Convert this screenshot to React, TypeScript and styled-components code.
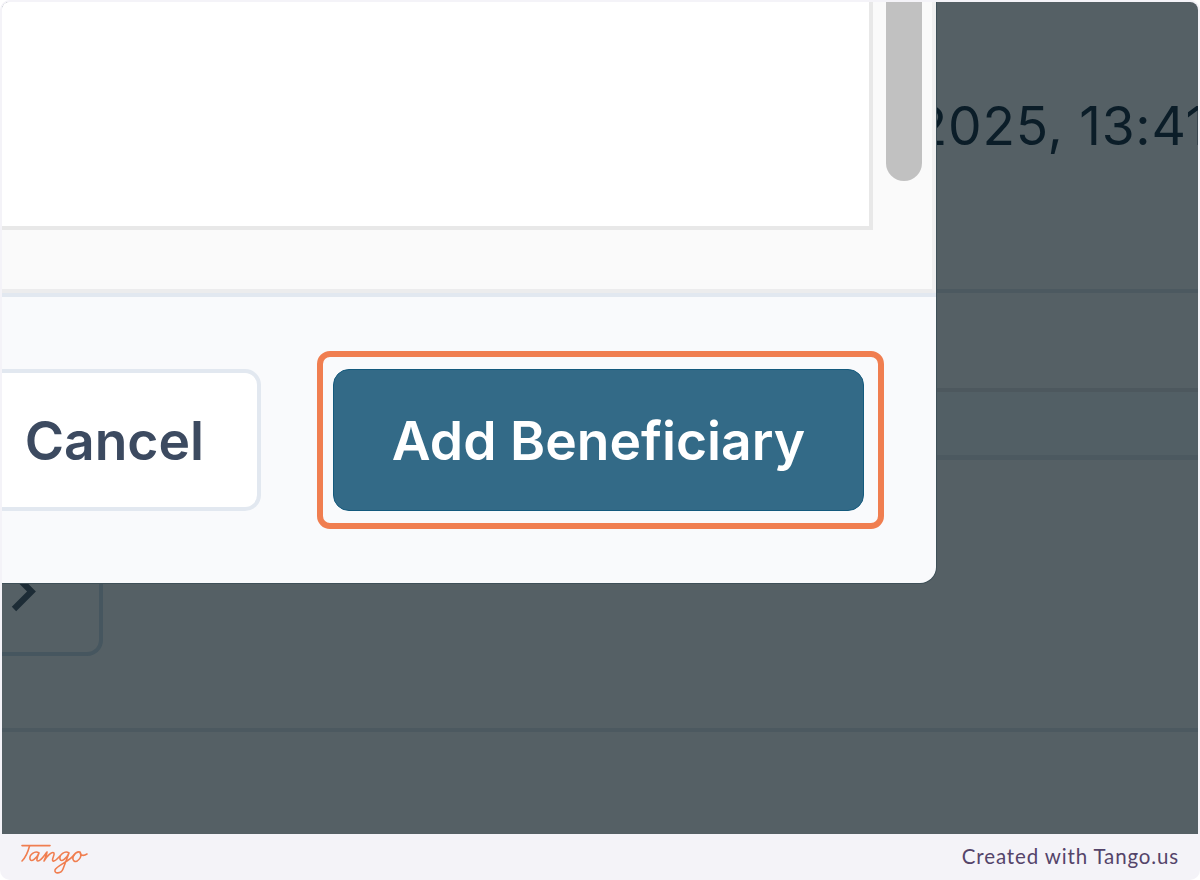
import React from "react";
import styled, { createGlobalStyle } from "styled-components";

const GlobalStyle = createGlobalStyle`
  *, *::before, *::after { box-sizing: border-box; }
  html, body { margin: 0; background: #fff; }
`;

const Frame = styled.main`
  display: flex;
  flex-direction: column;
  width: 1200px;
  height: 880px;
  padding: 2px 2px 0;
  border-radius: 10px;
  background: #f4f3f8;
  overflow: hidden;
  font-family: Inter, "Liberation Sans", sans-serif;
`;

const Screen = styled.section`
  position: relative;
  flex: none;
  height: 832px;
  border-radius: 8px 8px 0 0;
  background: #556065;
  overflow: hidden;
`;

const Row = styled.div<{ $height: number; $line?: string; $lineWidth?: number; $bg?: string }>`
  height: ${(p) => p.$height}px;
  background: ${(p) => p.$bg ?? "transparent"};
  border-bottom: ${(p) => p.$lineWidth ?? 4}px solid ${(p) => p.$line ?? "#4c5960"};
`;

const DateRow = styled(Row)`
  display: flex;
  justify-content: flex-end;
  padding-top: 92px;
`;

const DateText = styled.span`
  margin-right: -10px;
  font-size: 53.3px;
  line-height: 64px;
  letter-spacing: 0.75px;
  white-space: nowrap;
  color: #0b1d28;
`;

const PagerRow = styled(Row)`
  padding-top: 90px;
`;

const NextPage = styled.div`
  display: flex;
  align-items: flex-start;
  width: 101px;
  height: 106px;
  padding: 23px 0 0 8px;
  border: 4px solid #46565f;
  border-left: 0;
  border-radius: 0 16px 16px 0;
`;

const Dialog = styled.div`
  position: absolute;
  top: 0;
  left: 0;
  display: flex;
  flex-direction: column;
  width: 934px;
  height: 581px;
  border-radius: 0 0 16px 0;
  background: #f9fafc;
  box-shadow: 0 0 0 1px #3f5058;
  overflow: hidden;
`;

const DialogBody = styled.div`
  display: flex;
  flex: none;
  height: 291px;
  background: #fafafa;
  border-right: 4px solid #f0f0f0;
  border-bottom: 4px solid #ececed;
`;

const Panel = styled.div`
  flex: none;
  width: 871px;
  height: 228px;
  background: #fff;
  border-right: 4px solid #e8e8e8;
  border-bottom: 4px solid #e8e8e8;
`;

const ScrollThumb = styled.div`
  flex: none;
  width: 36px;
  height: 179px;
  margin-left: 13px;
  border-radius: 0 0 18px 18px;
  background: #c1c1c1;
`;

const DialogFooter = styled.footer`
  display: flex;
  flex: 1;
  align-items: flex-start;
  gap: 72px;
  padding-top: 72px;
  border-top: 4px solid #e2e8f0;
`;

const Button = styled.button<{ $primary?: boolean }>`
  display: flex;
  flex: none;
  align-items: center;
  justify-content: ${(p) => (p.$primary ? "center" : "flex-end")};
  width: ${(p) => (p.$primary ? 531 : 259)}px;
  height: 142px;
  padding: ${(p) => (p.$primary ? "1px 0 0" : "2px 53px 0 0")};
  border: ${(p) => (p.$primary ? "1px solid #145a7d" : "4px solid #e2e8f0")};
  ${(p) => !p.$primary && "border-left: 0;"}
  border-radius: ${(p) => (p.$primary ? "16px" : "0 16px 16px 0")};
  background: ${(p) => (p.$primary ? "#336a87" : "#fff")};
  color: ${(p) => (p.$primary ? "#fff" : "#3c4a60")};
  font-family: inherit;
  font-size: 53.4px;
  font-weight: 600;
  line-height: 64px;
  letter-spacing: 0;
  white-space: nowrap;
`;

const Highlight = styled.div`
  position: absolute;
  top: 349px;
  left: 315px;
  width: 567px;
  height: 178px;
  border: 6px solid #f07e50;
  border-radius: 13px;
`;

const Footer = styled.footer`
  display: flex;
  flex: 1;
  align-items: center;
  justify-content: space-between;
  padding: 0 19px 0 18px;
`;

const Credit = styled.span`
  padding-bottom: 2px;
  font-family: Lato, sans-serif;
  font-size: 20.5px;
  line-height: 24px;
  letter-spacing: 0.86px;
  color: #54446a;
`;

function ChevronRight() {
  return (
    <svg width="32" height="40" viewBox="0 0 32 40" fill="none" stroke="#1d2c36" strokeWidth="6.2">
      <path d="M4 -3 21.5 14.5 4 32" />
    </svg>
  );
}

function TangoLogo() {
  return (
    <svg width="70" height="34" viewBox="0 0 70 34" fill="none" stroke="#f07e50" strokeWidth="1.6" strokeLinecap="round" strokeLinejoin="round">
      <path d="M2 5.6H30" />
      <path d="M9.5 6C8 12 6 17 2 21" />
      <path d="M19 13C15 10 9 15 10 19C11 23 17 18 19 13C17 18 16 21 18 21C21 21 24 16 27 12C27 15 25 18 24 21C27 16 32 11 34 13C35 15 31 20 33 21C35 22 38 18 40 16" />
      <path d="M49 13C45 10 39 15 40 19C41 23 47 18 49 13L43 29C41 34 34 34 35 30C36 26 50 21 54 15" />
      <path d="M60 12C55 11 51 18 54 21C57 23 63 17 60 12C60 16 64 16 67 14" />
    </svg>
  );
}

export default function App() {
  return (
    <>
      <GlobalStyle />
      <Frame>
        <Screen>
          <DateRow $height={291}>
            <DateText>2025, 13:41</DateText>
          </DateRow>
          <Row $height={99} $line="#4d585e" />
          <Row $height={68} $bg="#525f65" $lineWidth={5} />
          <PagerRow $height={272}>
            <NextPage>
              <ChevronRight />
            </NextPage>
          </PagerRow>
          <Dialog role="dialog">
            <DialogBody>
              <Panel />
              <ScrollThumb />
            </DialogBody>
            <DialogFooter>
              <Button type="button">Cancel</Button>
              <Button type="button" $primary>
                Add Beneficiary
              </Button>
            </DialogFooter>
          </Dialog>
          <Highlight />
        </Screen>
        <Footer>
          <TangoLogo />
          <Credit>Created with Tango.us</Credit>
        </Footer>
      </Frame>
    </>
  );
}
